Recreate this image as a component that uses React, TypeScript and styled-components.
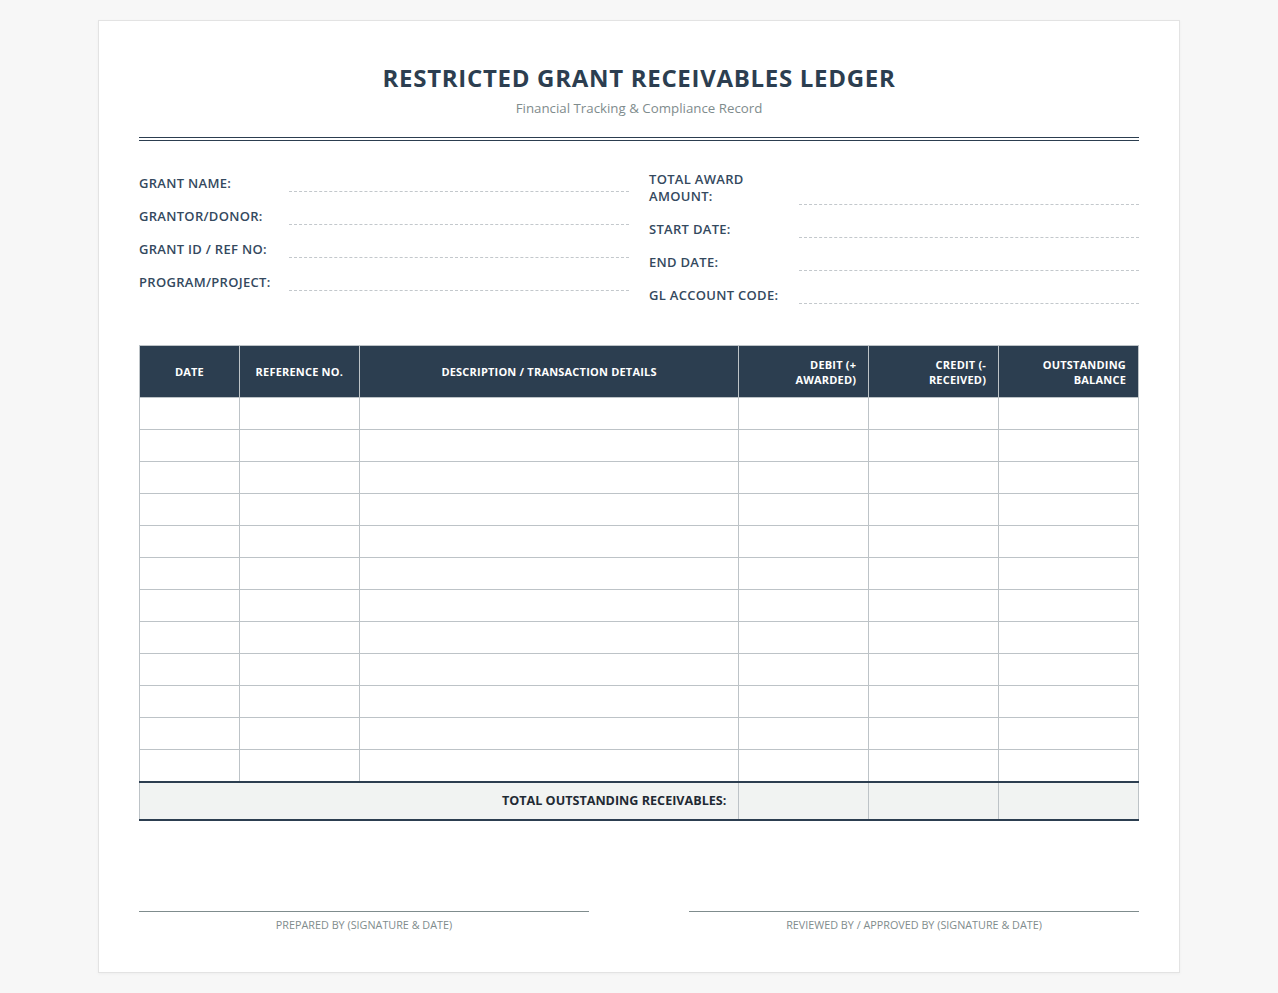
import React from 'react';
import styled, { createGlobalStyle } from 'styled-components';

const GlobalStyle = createGlobalStyle`
  body {
    margin: 0;
    background: #f7f7f7;
    font-family: 'Open Sans', 'Liberation Sans', sans-serif;
    color: #2c3e50;
  }
`;

const Page = styled.div`
  width: 1000px;
  margin: 20px auto;
  padding: 40px 40px 40px;
  background: #fff;
  border: 1px solid #e3e3e3;
  box-shadow: 0 1px 3px rgba(0, 0, 0, 0.04);
`;

const Header = styled.header`
  text-align: center;
  padding-bottom: 19px;
  border-bottom: 4px double #2c3e50;
`;

const Title = styled.h1`
  margin: 0;
  font-size: 24px;
  line-height: 33px;
  font-weight: 700;
  letter-spacing: 0.7px;
  color: #2c3e50;
`;

const Subtitle = styled.div`
  margin-top: 5px;
  font-size: 13.3px;
  line-height: 19px;
  color: #7f8c8d;
`;

const InfoGrid = styled.section`
  display: grid;
  grid-template-columns: 1fr 1fr;
  column-gap: 20px;
  margin-top: 30px;
`;

const InfoColumn = styled.div`
  display: flex;
  flex-direction: column;
`;

const InfoRow = styled.div`
  display: flex;
  align-items: flex-end;
  margin-bottom: 12px;
`;

const InfoLabel = styled.span`
  width: 140px;
  padding-right: 10px;
  flex-shrink: 0;
  font-size: 13px;
  line-height: 17px;
  font-weight: 600;
  letter-spacing: 0.3px;
  color: #34495e;
`;

const InfoField = styled.span`
  flex: 1;
  height: 20px;
  border-bottom: 1px dashed #c3c8cc;
`;

const Table = styled.table`
  width: 100%;
  margin-top: 29px;
  border-collapse: collapse;
  table-layout: fixed;
`;

const Th = styled.th<{ $align?: string; $width: string }>`
  width: ${p => p.$width};
  height: 52px;
  padding: 0 12px;
  box-sizing: border-box;
  background: #2c3e50;
  color: #fff;
  font-size: 11px;
  line-height: 15px;
  font-weight: 700;
  letter-spacing: 0.2px;
  text-transform: uppercase;
  text-align: ${p => p.$align || 'center'};
  border: 1px solid #bdc3c7;
`;

const Td = styled.td`
  height: 32px;
  padding: 0;
  box-sizing: border-box;
  border: 1px solid #bdc3c7;
`;

const TotalRow = styled.tr`
  background: #f1f3f2;
  border-top: 2px solid #2c3e50;
  border-bottom: 2px solid #2c3e50;
`;

const TotalLabel = styled.td`
  height: 38px;
  padding: 0 12px;
  box-sizing: border-box;
  text-align: right;
  font-size: 12.6px;
  font-weight: 700;
  color: #1f2a33;
  border-left: 1px solid #bdc3c7;
  border-right: 1px solid #bdc3c7;
`;

const TotalCell = styled.td`
  border-left: 1px solid #bdc3c7;
  border-right: 1px solid #bdc3c7;
`;

const Signatures = styled.section`
  display: grid;
  grid-template-columns: 450px 450px;
  justify-content: space-between;
  margin-top: 90px;
`;

const SignatureBlock = styled.div`
  border-top: 1px solid #7f8c8d;
  padding-top: 6px;
  text-align: center;
  font-size: 10.8px;
  line-height: 14px;
  color: #7f8c8d;
  text-transform: uppercase;
`;

const leftFields = ['Grant Name:', 'Grantor/Donor:', 'Grant ID / Ref No:', 'Program/Project:'];
const rightFields = ['Total Award Amount:', 'Start Date:', 'End Date:', 'GL Account Code:'];

const columns = [
  { label: 'Date', width: '10%' },
  { label: 'Reference No.', width: '12%' },
  { label: 'Description / Transaction Details', width: '38%' },
  { label: 'Debit (+ Awarded)', width: '13%', align: 'right' },
  { label: 'Credit (- Received)', width: '13%', align: 'right' },
  { label: 'Outstanding Balance', width: '14%', align: 'right' },
];

const rows = Array.from({ length: 12 }, (_, i) => i);

const App: React.FC = () => (
  <>
    <GlobalStyle />
    <Page>
      <Header>
        <Title>RESTRICTED GRANT RECEIVABLES LEDGER</Title>
        <Subtitle>Financial Tracking &amp; Compliance Record</Subtitle>
      </Header>

      <InfoGrid>
        {[leftFields, rightFields].map((fields, c) => (
          <InfoColumn key={c}>
            {fields.map(f => (
              <InfoRow key={f}>
                <InfoLabel>{f.toUpperCase()}</InfoLabel>
                <InfoField />
              </InfoRow>
            ))}
          </InfoColumn>
        ))}
      </InfoGrid>

      <Table>
        <thead>
          <tr>
            {columns.map(col => (
              <Th key={col.label} $width={col.width} $align={col.align}>
                {col.label}
              </Th>
            ))}
          </tr>
        </thead>
        <tbody>
          {rows.map(r => (
            <tr key={r}>
              {columns.map(col => (
                <Td key={col.label} />
              ))}
            </tr>
          ))}
          <TotalRow>
            <TotalLabel colSpan={3}>TOTAL OUTSTANDING RECEIVABLES:</TotalLabel>
            <TotalCell />
            <TotalCell />
            <TotalCell />
          </TotalRow>
        </tbody>
      </Table>

      <Signatures>
        <SignatureBlock>Prepared By (Signature &amp; Date)</SignatureBlock>
        <SignatureBlock>Reviewed By / Approved By (Signature &amp; Date)</SignatureBlock>
      </Signatures>
    </Page>
  </>
);

export default App;
